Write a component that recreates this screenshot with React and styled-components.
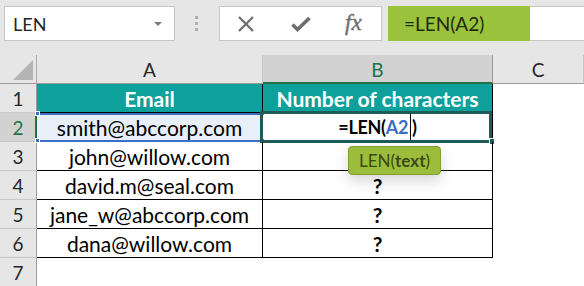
import React from "react";
import styled, { createGlobalStyle, css } from "styled-components";

const Global = createGlobalStyle`
  html, body { margin: 0; padding: 0; background: #fff; }
  body { font-family: Lato, "Liberation Sans", sans-serif; }
`;

const Page = styled.div`
  width: 584px;
  height: 286px;
  overflow: hidden;
  background: #fff;
`;

const Toolbar = styled.div`
  display: flex;
  align-items: flex-start;
  height: 55px;
  box-sizing: border-box;
  padding: 6px 0 0 4px;
  background: #e6e6e6;
`;

const NameBox = styled.div`
  width: 171px;
  height: 35px;
  box-sizing: border-box;
  border: 1px solid #c6c6c6;
  background: #fff;
  display: flex;
  align-items: center;
  justify-content: space-between;
  padding: 0 12px 0 8px;
  font-size: 18px;
  color: #262626;
`;

const Caret = styled.span`
  width: 0;
  height: 0;
  border-left: 4px solid transparent;
  border-right: 4px solid transparent;
  border-top: 4px solid #7a7a7a;
`;

const Dots = styled.div`
  display: flex;
  flex-direction: column;
  gap: 3px;
  margin: 10px 0 0 20px;
  span {
    width: 3px;
    height: 3px;
    background: #b0b0b0;
  }
`;

const IconBox = styled.div`
  width: 163px;
  height: 35px;
  margin-left: 21px;
  box-sizing: border-box;
  border: 1px solid #c6c6c6;
  background: #fff;
  display: flex;
  align-items: center;
  padding-left: 17px;
  gap: 36px;
  color: #6e6e6e;
`;

const Fx = styled.span`
  font-family: "Liberation Serif", serif;
  font-style: italic;
  font-size: 23px;
  color: #6f6f6f;
  margin: -2px 0 0 -2px;
  -webkit-text-stroke: 0.4px #6f6f6f;
`;

const FormulaBox = styled.div`
  flex: 1;
  height: 35px;
  margin-left: 6px;
  box-sizing: border-box;
  border: 1px solid #c6c6c6;
  border-right: none;
  background: #fff;
  display: flex;
`;

const FormulaText = styled.div`
  width: 142px;
  height: 35px;
  margin: -1px 0 0 -1px;
  background: #9bc23c;
  display: flex;
  align-items: center;
  padding-left: 16px;
  box-sizing: border-box;
  font-size: 19px;
  color: #1f2a10;
`;

const Sheet = styled.div`
  display: grid;
  grid-template-columns: 37px 226px 230px 1fr;
  grid-auto-rows: 29px;
  font-size: 21px;
`;

const Corner = styled.div`
  position: relative;
  background: #e6e6e6;
  border-right: 1px solid #ababab;
  border-bottom: 1px solid #9b9b9b;
  &::after {
    content: "";
    position: absolute;
    right: 3px;
    bottom: 3px;
    width: 20px;
    height: 20px;
    background: #b4b4b4;
    clip-path: polygon(100% 0, 100% 100%, 0 100%);
  }
`;

const ColHead = styled.div`
  display: flex;
  align-items: center;
  justify-content: center;
  background: ${({ $selected }) => ($selected ? "#d2d2d2" : "#e6e6e6")};
  color: ${({ $selected }) => ($selected ? "#217346" : "#262626")};
  border-right: 1px solid ${({ $selected }) => ($selected ? "#9b9b9b" : "#c8c8c8")};
  border-bottom: ${({ $selected }) =>
    $selected ? "2px solid #217346" : "1px solid #9b9b9b"};
  box-sizing: border-box;
  padding-top: ${({ $selected }) => ($selected ? "1px" : "0")};
  font-size: 19px;
`;

const RowHead = styled.div`
  display: flex;
  align-items: center;
  justify-content: center;
  box-sizing: border-box;
  background: ${({ $selected }) => ($selected ? "#d2d2d2" : "#e6e6e6")};
  color: ${({ $selected }) => ($selected ? "#217346" : "#262626")};
  border-right: ${({ $selected }) =>
    $selected ? "2px solid #217346" : "1px solid #9b9b9b"};
  border-bottom: 1px solid #c8c8c8;
  padding-left: ${({ $selected }) => ($selected ? "1px" : "0")};
  font-size: 19px;
`;

const Cell = styled.div`
  position: relative;
  display: flex;
  align-items: center;
  justify-content: center;
  box-sizing: border-box;
  color: #000;
  white-space: nowrap;
  ${({ $table }) =>
    $table &&
    css`
      border-right: 1px solid #000;
      border-bottom: 1px solid #000;
    `}
  ${({ $head }) =>
    $head &&
    css`
      background: #0ea19c;
      color: #fff;
      font-weight: 700;
    `}
  ${({ $ref }) =>
    $ref &&
    css`
      background: #e8eff9;
      box-shadow: inset 0 2px 0 #3c6fc6, inset 0 -1px 0 #3c6fc6;
      border-bottom-color: #3c6fc6;
    `}
  ${({ $bold }) => $bold && css`font-weight: 700;`}
`;

const Handle = styled.span`
  position: absolute;
  width: 3px;
  height: 3px;
  background: #3c6fc6;
  border: 1px solid #fff;
  ${({ $top }) => ($top ? "top: -2px;" : "bottom: -2px;")}
  ${({ $left }) => ($left ? "left: -2px;" : "right: -3px;")}
`;

const Active = styled.div`
  position: absolute;
  top: -2px;
  left: -3px;
  right: 0;
  bottom: -2px;
  border: 3px solid #1e5c5a;
  pointer-events: none;
  &::after {
    content: "";
    position: absolute;
    right: -5px;
    bottom: -4px;
    width: 4px;
    height: 5px;
    background: #1e5c5a;
    border: 1px solid #fff;
    border-right: none;
    border-bottom: none;
  }
`;

const Editing = styled.span`
  display: flex;
  align-items: center;
  font-size: 18px;
  letter-spacing: -0.3px;
  font-weight: 700;
`;

const RefText = styled.span`
  color: #3a6fc4;
`;

const TextCursor = styled.span`
  display: inline-block;
  width: 1px;
  height: 27px;
  background: #000;
  margin: 0 1px 0 2px;
`;

const Tooltip = styled.div`
  position: absolute;
  left: 85px;
  top: 33px;
  z-index: 2;
  width: 93px;
  height: 29px;
  box-sizing: border-box;
  border: 1px solid #7f9f2e;
  border-radius: 4px;
  background: #9bbd3b;
  color: #3a4a14;
  font-size: 17px;
  font-weight: 400;
  display: flex;
  align-items: center;
  justify-content: center;
  box-shadow: 0 6px 14px rgba(0, 0, 0, 0.16);
  b {
    font-weight: 700;
  }
`;

const emails = [
  "smith@abccorp.com",
  "john@willow.com",
  "david.m@seal.com",
  "jane_w@abccorp.com",
  "dana@willow.com",
];

const CrossIcon = () => (
  <svg width="18" height="18" viewBox="0 0 18 18">
    <path d="M2 2l14 14M16 2L2 16" stroke="#6e6e6e" strokeWidth="2.2" fill="none" />
  </svg>
);

const CheckIcon = () => (
  <svg width="20" height="16" viewBox="0 0 20 16">
    <path d="M1.5 8.5l5 5L18.5 2" stroke="#6e6e6e" strokeWidth="3.6" fill="none" />
  </svg>
);

export default function App() {
  return (
    <Page>
      <Global />
      <Toolbar>
        <NameBox>
          LEN
          <Caret />
        </NameBox>
        <Dots>
          <span />
          <span />
          <span />
        </Dots>
        <IconBox>
          <CrossIcon />
          <CheckIcon />
          <Fx>fx</Fx>
        </IconBox>
        <FormulaBox>
          <FormulaText>=LEN(A2)</FormulaText>
        </FormulaBox>
      </Toolbar>
      <Sheet>
        <Corner />
        <ColHead>A</ColHead>
        <ColHead $selected>B</ColHead>
        <ColHead>C</ColHead>

        <RowHead>1</RowHead>
        <Cell $table $head>Email</Cell>
        <Cell $table $head>Number of characters</Cell>
        <Cell />

        {emails.map((email, i) => {
          const row = i + 2;
          const first = row === 2;
          return (
            <React.Fragment key={email}>
              <RowHead $selected={first}>{row}</RowHead>
              <Cell $table $ref={first}>
                {email}
                {first && (
                  <>
                    <Handle $top $left />
                    <Handle $left />
                    <Handle $top />
                    <Handle />
                  </>
                )}
              </Cell>
              <Cell $table $bold>
                {first ? (
                  <>
                    <Editing>
                      =LEN(<RefText>A2</RefText>
                      <TextCursor />)
                    </Editing>
                    <Active />
                    <Tooltip>
                      LEN(<b>text</b>)
                    </Tooltip>
                  </>
                ) : row === 3 ? null : (
                  "?"
                )}
              </Cell>
              <Cell />
            </React.Fragment>
          );
        })}

        <RowHead>7</RowHead>
        <Cell />
        <Cell />
        <Cell />
      </Sheet>
    </Page>
  );
}
